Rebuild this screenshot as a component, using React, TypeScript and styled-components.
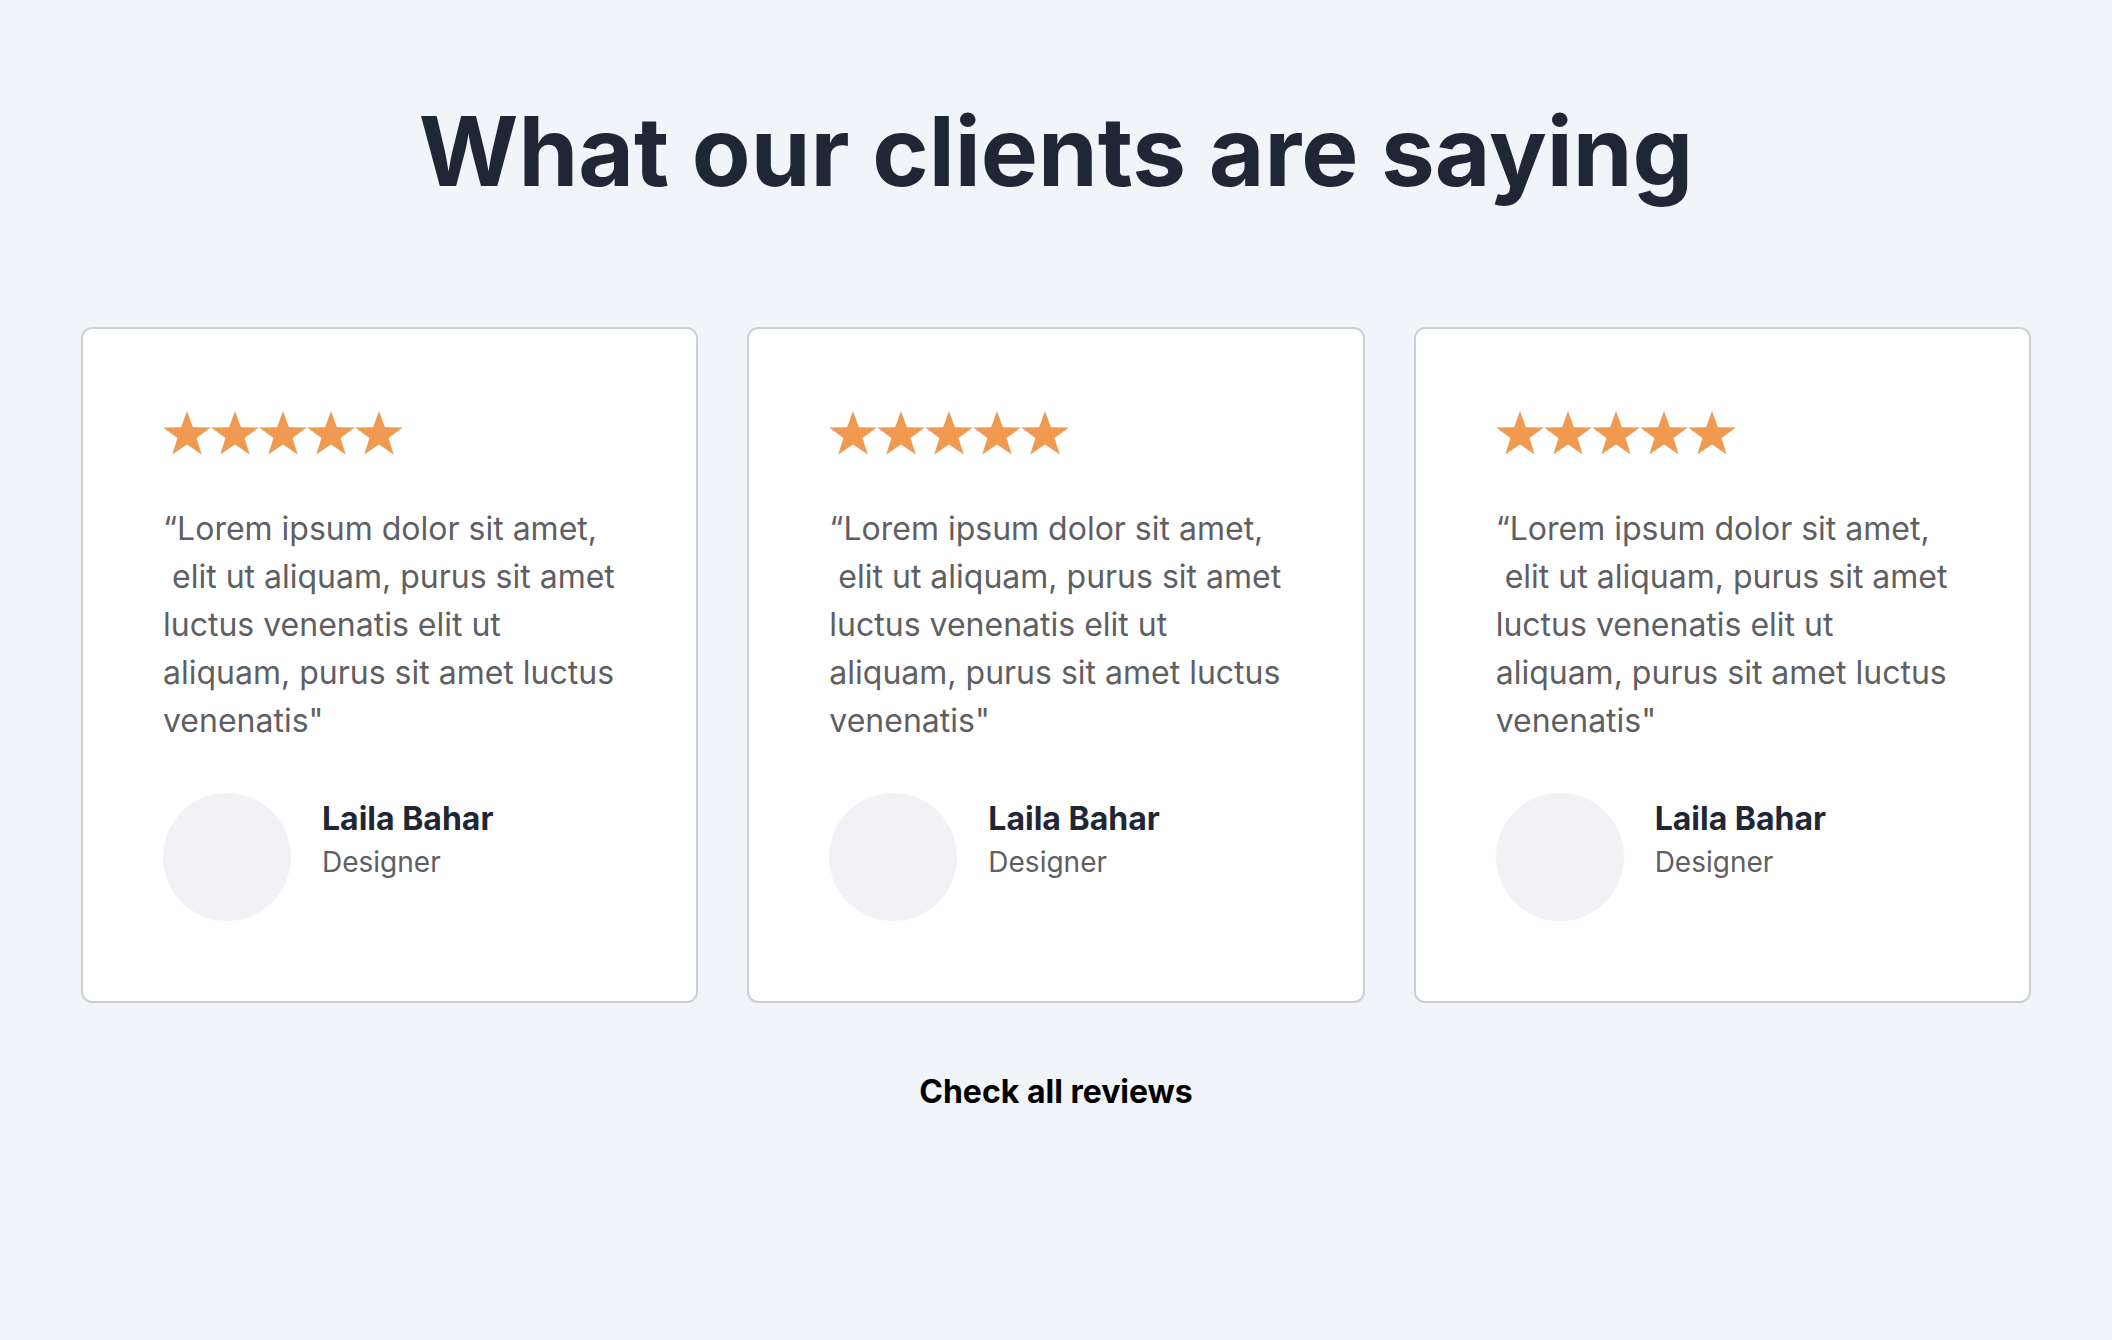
import React from "react";
import styled, { createGlobalStyle } from "styled-components";

const GlobalStyle = createGlobalStyle`
  html, body {
    margin: 0;
    padding: 0;
    background: #f1f5f9;
  }
  body {
    font-family: Inter, "Noto Sans", sans-serif;
  }
  * { box-sizing: border-box; }
`;

const Page = styled.main`
  min-height: 1340px;
  background: #f1f5f9;
  padding: 94px 81px 0;
  display: flex;
  flex-direction: column;
  align-items: center;
`;

const Title = styled.h1`
  margin: 0;
  font-size: 96px;
  line-height: 1.2;
  font-weight: 700;
  color: #1f2736;
  text-align: center;
`;

const Grid = styled.section`
  width: 100%;
  margin-top: 118px;
  display: grid;
  grid-template-columns: repeat(3, 1fr);
  gap: 49px;
`;

const Card = styled.article`
  background: #ffffff;
  border: 2px solid #cdcfd3;
  border-radius: 11px;
  padding: 80px 80px 80px 80px;
  display: flex;
  flex-direction: column;
`;

const Stars = styled.div`
  display: flex;
  padding-top: 2px;
  height: 45px;
  align-items: flex-start;
`;

const Quote = styled.p`
  margin: 51px 0 0;
  font-size: 32px;
  line-height: 48px;
  color: #5f5f63;
`;

const Author = styled.div`
  margin-top: 48px;
  display: flex;
  align-items: flex-start;
  gap: 31px;
`;

const Avatar = styled.div`
  width: 128px;
  height: 128px;
  border-radius: 50%;
  background: #f2f1f6;
  flex-shrink: 0;
`;

const Meta = styled.div`
  display: flex;
  flex-direction: column;
  padding-top: 8px;
`;

const Name = styled.div`
  font-size: 32px;
  line-height: 36px;
  font-weight: 700;
  color: #1f2736;
`;

const Role = styled.div`
  margin-top: 8px;
  font-size: 28px;
  line-height: 34px;
  color: #5f5f63;
`;

const ReviewsLink = styled.a`
  margin-top: 70px;
  font-size: 32px;
  line-height: 1.2;
  font-weight: 700;
  color: #000000;
  text-decoration: none;
  cursor: pointer;
`;

const Star: React.FC = () => {
  const R = 24;
  const r = R * 0.4;
  const cx = 24;
  const cy = 24;
  const sx = 1.045;
  const pts: string[] = [];
  for (let i = 0; i < 10; i++) {
    const rad = i % 2 === 0 ? R : r;
    const a = (Math.PI / 5) * i - Math.PI / 2;
    pts.push(`${(cx + rad * Math.cos(a) * sx).toFixed(2)},${(cy + rad * Math.sin(a)).toFixed(2)}`);
  }
  return (
    <svg width="48" height="44" viewBox="0 0 48 44" aria-hidden="true">
      <polygon points={pts.join(" ")} fill="#ef9a50" />
    </svg>
  );
};

const reviews = [0, 1, 2];

export default function App() {
  return (
    <>
      <GlobalStyle />
      <Page>
        <Title>What our clients are saying</Title>
        <Grid>
          {reviews.map((k) => (
            <Card key={k}>
              <Stars>
                {[0, 1, 2, 3, 4].map((s) => (
                  <Star key={s} />
                ))}
              </Stars>
              <Quote>
                “Lorem ipsum dolor sit amet,
                <br />
                {"\u00a0elit ut aliquam, purus sit amet luctus venenatis elit ut aliquam, purus sit amet luctus venenatis\""}
              </Quote>
              <Author>
                <Avatar />
                <Meta>
                  <Name>Laila Bahar</Name>
                  <Role>Designer</Role>
                </Meta>
              </Author>
            </Card>
          ))}
        </Grid>
        <ReviewsLink>Check all reviews</ReviewsLink>
      </Page>
    </>
  );
}
